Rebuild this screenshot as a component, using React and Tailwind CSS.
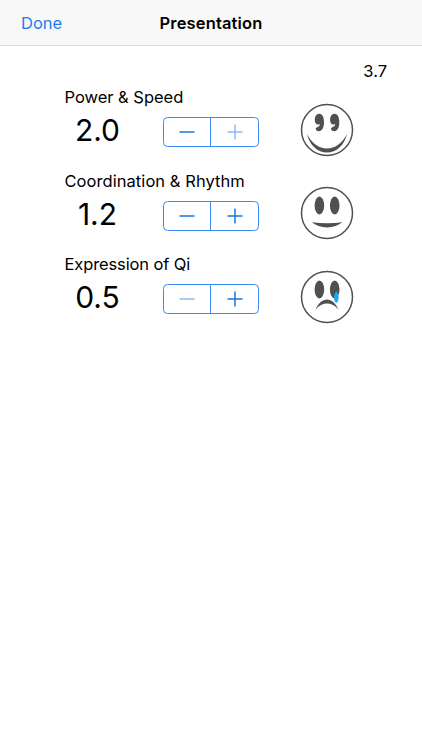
import React from 'react';

function CommaEye() {
  return (
    <path d="M19.4 10.8C22.5 10.8 24 14.6 24 19.3C24 24.6 22 28.2 19 28.2C17.2 28.2 15.6 27.3 15.7 25.8C15.8 24.4 17.2 24 18.5 23.4C19.6 22.8 20 21.9 19.8 21C18.8 21.7 17 21.9 16 20.8C13.9 18 14.3 10.8 19.4 10.8z" />
  );
}

function Eyes({ mood }) {
  if (mood === 'happy') {
    return (
      <g fill="#505050">
        <CommaEye />
        <g transform="translate(15.3 0)">
          <CommaEye />
        </g>
      </g>
    );
  }
  return (
    <g fill="#505050">
      <ellipse cx="19.4" cy="19.5" rx="4.8" ry="8.9" />
      <ellipse cx="34.7" cy="19.5" rx="4.8" ry="8.9" />
    </g>
  );
}

function Face({ mood }) {
  return (
    <svg viewBox="0 0 54 54" className="mt-[15.5px] h-[54px] w-[54px] shrink-0">
      <circle cx="27" cy="27" r="25.5" fill="#fff" stroke="#505050" strokeWidth="1.5" />
      <Eyes mood={mood} />
      {mood === 'happy' && (
        <path d="M6.8 31C12 40.5 19 45.5 27 45.5S42 40.5 47.2 31C44 42.5 36.5 49.6 27 49.6S10 42.5 6.8 31z" fill="#505050" />
      )}
      {mood === 'neutral' && (
        <path d="M11.7 36.2Q27 38.2 42.5 36.2C38.5 39.3 33 41.4 27 41.4S15.5 39.3 11.7 36.2z" fill="#505050" />
      )}
      {mood === 'sad' && (
        <>
          <path d="M15.5 39.7C18.5 33 22.5 29.5 27 29.5S35.5 33 38.5 39.7C35 35.3 31 33.5 27 33.5S19 35.3 15.5 39.7z" fill="#505050" />
          <path d="M36.3 21C37.3 22.5 38.7 24.5 38.6 27.3C38.5 30.3 38 32.2 36.2 32.9C34.6 32.2 33.9 29.8 34 27C34.1 24.5 35.2 22.9 36.3 21z" fill="#18a8f5" />
        </>
      )}
    </svg>
  );
}

function Stepper({ canDecrease, canIncrease }) {
  return (
    <div className="flex h-[30px] w-24 rounded-[4.5px] border border-[#388cf0]">
      <button aria-label="Decrease" disabled={!canDecrease} className="flex w-[47px] items-center justify-center border-r border-[#388cf0] text-[#1478e4] disabled:text-[#8abcf2]">
        <svg viewBox="0 0 16 16" className="h-4 w-4" stroke="currentColor" strokeWidth="1.5">
          <path d="M0.5 8H15.5" />
        </svg>
      </button>
      <button aria-label="Increase" disabled={!canIncrease} className="flex flex-1 items-center justify-center text-[#1478e4] disabled:text-[#8abcf2]">
        <svg viewBox="0 0 16 16" className="h-4 w-4" stroke="currentColor" strokeWidth="1.5">
          <path d="M0.5 8H15.5M8 0.5V15.5" />
        </svg>
      </button>
    </div>
  );
}

const criteria = [
  { label: 'Power & Speed', value: '2.0', mood: 'happy', canDecrease: true, canIncrease: false, tracking: 'tracking-[-0.02px]' },
  { label: 'Coordination & Rhythm', value: '1.2', mood: 'neutral', canDecrease: true, canIncrease: true, tracking: 'tracking-[0.06px]' },
  { label: 'Expression of Qi', value: '0.5', mood: 'sad', canDecrease: false, canIncrease: true, tracking: 'tracking-[-0.12px]' },
];

export default function App() {
  return (
    <div className="h-[750px] w-full bg-white font-['Inter',sans-serif] text-black">
      <header className="grid h-[46px] grid-cols-3 items-center border-b border-[#dcdcdc] bg-[#f8f8f8] px-[21px] pt-px text-[16.5px] leading-none">
        <button className="justify-self-start text-[#1c7ff0]">Done</button>
        <h1 className="justify-self-center font-semibold tracking-[0.15px]">Presentation</h1>
      </header>
      <div className="flex h-[41px] justify-end pt-[15px] pr-[35px] text-[16.5px] leading-[21px]">3.7</div>
      <main className="pl-[64.5px]">
        {criteria.map((item) => (
          <section key={item.label} className="flex h-[83.5px]">
            <div className="w-[235.5px]">
              <h2 className={`h-[20px] text-[16.5px] leading-[20px] whitespace-nowrap ${item.tracking}`}>{item.label}</h2>
              <div className="mt-[10px] flex">
                <div className="w-[66px] text-center text-[30px] leading-[26px]">{item.value}</div>
                <div className="ml-[32.5px]">
                  <Stepper canDecrease={item.canDecrease} canIncrease={item.canIncrease} />
                </div>
              </div>
            </div>
            <Face mood={item.mood} />
          </section>
        ))}
      </main>
    </div>
  );
}
